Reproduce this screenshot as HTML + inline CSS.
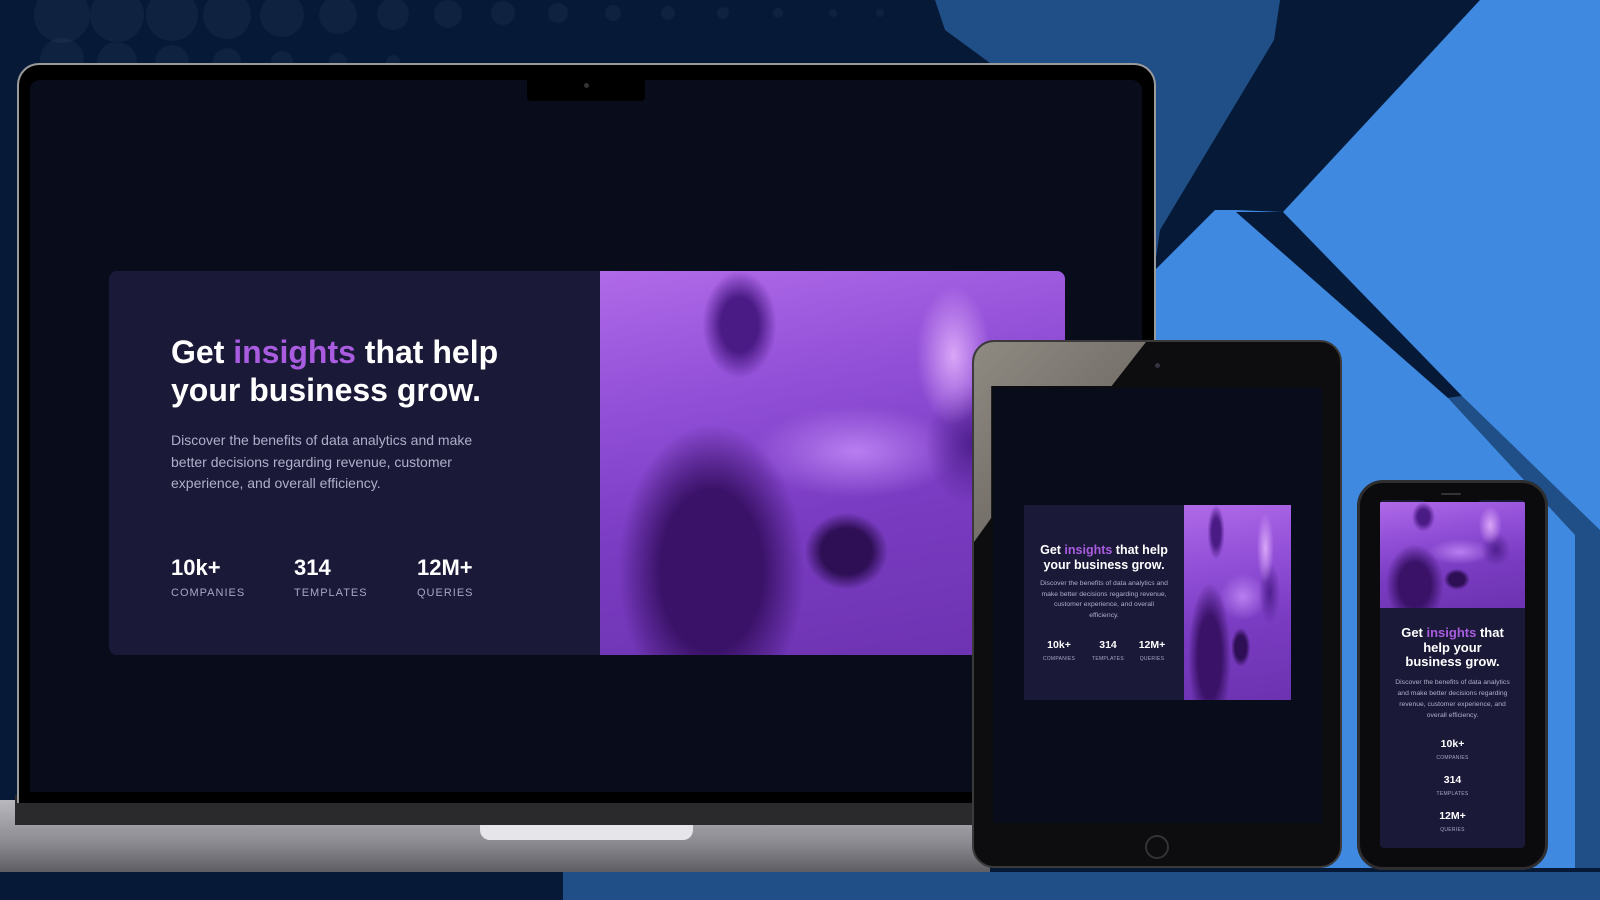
<!DOCTYPE html>
<html><head><meta charset="utf-8"><style>
*{margin:0;padding:0;box-sizing:border-box}
body{width:1600px;height:900px;overflow:hidden;background:#061a38;font-family:"Liberation Sans",sans-serif;position:relative}
.a{position:absolute}
.img{background:
 radial-gradient(ellipse 20% 38% at 24% 78%,#3a1268 0,#3a1268 55%,transparent 100%),
 radial-gradient(ellipse 9% 10% at 53% 73%,#2e0f55 0,#2e0f55 60%,transparent 100%),
 radial-gradient(ellipse 8% 14% at 30% 14%,#4a1a85 0,#4a1a85 50%,transparent 100%),
 radial-gradient(ellipse 8% 18% at 76% 22%,#d9a6f7 0,transparent 100%),
 radial-gradient(ellipse 10% 16% at 80% 45%,#4f1f8e 0,transparent 100%),
 radial-gradient(ellipse 22% 12% at 55% 47%,#b87ef0 0,transparent 100%),
 linear-gradient(170deg,#b06ae8 0%,#9250d8 30%,#7a3cc2 60%,#6c32b0 100%)}
.h{color:#fff;font-weight:bold}
.p{color:#b0afc8}
.pu{color:#a95ce0}
.n{color:#fff;font-weight:bold}
.l{color:#a8a7c0;letter-spacing:1px}
</style></head><body>
<svg class="a" style="left:0;top:0" width="1600" height="900">
 <g fill="#ffffff" fill-opacity="0.04">
  <circle cx="62" cy="15" r="28"/><circle cx="117" cy="15" r="27"/><circle cx="172" cy="15" r="26"/><circle cx="227" cy="15" r="24"/><circle cx="282" cy="15" r="22"/><circle cx="338" cy="15" r="19"/><circle cx="393" cy="14" r="16"/><circle cx="448" cy="14" r="14"/><circle cx="503" cy="13" r="12"/><circle cx="558" cy="13" r="10"/><circle cx="613" cy="13" r="8"/><circle cx="668" cy="13" r="7"/><circle cx="723" cy="13" r="6"/><circle cx="778" cy="13" r="5"/><circle cx="833" cy="13" r="4"/><circle cx="880" cy="13" r="4"/>
  <circle cx="62" cy="60" r="22"/><circle cx="117" cy="62" r="20"/><circle cx="172" cy="62" r="17"/><circle cx="227" cy="62" r="14"/><circle cx="282" cy="62" r="11"/><circle cx="338" cy="62" r="9"/><circle cx="393" cy="62" r="7"/>
 </g>
 <polygon points="935,0 1280,0 1274,40 1160,230 1150,300 990,63 945,30" fill="#1f4f86"/>
 <polygon points="1480,0 1600,0 1600,900 1150,900 1150,275 1215,210 1235,210 1283,212" fill="#3f8ae0"/>
 <polygon points="1236,212 1283,212 1462,396 1448,398" fill="#061a38"/>
 <polygon points="1448,398 1462,396 1600,530 1600,900 1575,900 1575,535" fill="#1f4f86"/>
 <rect x="0" y="868" width="1600" height="32" fill="#061a38"/>
 <rect x="563" y="872" width="1037" height="28" fill="#1f4f86"/>
</svg>

<!-- Laptop -->
<div class="a" style="left:0;top:800px;width:990px;height:72px;background:linear-gradient(#b8b8be,#8a8a90 60%,#5d5d63);"></div>
<div class="a" style="left:15px;top:795px;width:975px;height:30px;background:#2a2a2c"></div>
<div class="a" style="left:480px;top:825px;width:213px;height:15px;background:#e6e6ea;border-radius:0 0 10px 10px"></div>
<div class="a" style="left:17px;top:63px;width:1139px;height:740px;background:#000;border-radius:22px 22px 0 0;border:2px solid #9a9a9a;border-bottom:none"></div>
<div class="a" style="left:30px;top:80px;width:1112px;height:712px;background:#090c1a;border-radius:10px 10px 0 0"></div>
<div class="a" style="left:527px;top:80px;width:118px;height:21px;background:#000;border-radius:0 0 4px 4px"></div>
<div class="a" style="left:584px;top:83px;width:5px;height:5px;background:#333;border-radius:50%"></div>
<div class="a" style="left:109px;top:271px;width:956px;height:384px;background:#1b1938;border-radius:8px;overflow:hidden">
 <div class="a img" style="left:491px;top:0;width:465px;height:384px"></div>
 <div class="a h" style="left:62px;top:62px;font-size:32px;line-height:38px;width:400px">Get <span class="pu">insights</span> that help your business grow.</div>
 <div class="a p" style="left:62px;top:159px;font-size:14px;line-height:21.5px;width:320px">Discover the benefits of data analytics and make better decisions regarding revenue, customer experience, and overall efficiency.</div>
 <div class="a n" style="left:62px;top:284px;font-size:22px">10k+</div>
 <div class="a l" style="left:62px;top:316px;font-size:11px">COMPANIES</div>
 <div class="a n" style="left:185px;top:284px;font-size:22px">314</div>
 <div class="a l" style="left:185px;top:316px;font-size:11px">TEMPLATES</div>
 <div class="a n" style="left:308px;top:284px;font-size:22px">12M+</div>
 <div class="a l" style="left:308px;top:316px;font-size:11px">QUERIES</div>
</div>

<!-- Tablet -->
<div class="a" style="left:972px;top:340px;width:370px;height:528px;background:#0d0d0f;border-radius:22px;border:2px solid #3a3a3a"></div>
<div class="a" style="left:974px;top:342px;width:172px;height:200px;background:linear-gradient(135deg,#8f8a82,#5e5a55);clip-path:polygon(0 0,100% 0,80% 22%,10% 22%,10% 88%,0 100%);border-radius:20px 0 0 0"></div>
<div class="a" style="left:1155px;top:363px;width:5px;height:5px;background:#334;border-radius:50%"></div>
<div class="a" style="left:993px;top:388px;width:329px;height:435px;background:#090c1a"></div>
<div class="a" style="left:1145px;top:835px;width:24px;height:24px;border:2px solid #333;border-radius:50%"></div>
<div class="a" style="left:1024px;top:505px;width:267px;height:195px;background:#1b1938;overflow:hidden">
 <div class="a img" style="left:160px;top:0;width:107px;height:195px"></div>
 <div class="a h" style="left:10px;top:38px;width:140px;text-align:center;font-size:12.5px;line-height:14.5px">Get <span class="pu">insights</span> that help your business grow.</div>
 <div class="a p" style="left:16px;top:74px;width:128px;text-align:center;font-size:6.8px;line-height:10.7px">Discover the benefits of data analytics and make better decisions regarding revenue, customer experience, and overall efficiency.</div>
 <div class="a n" style="left:18px;top:134px;width:34px;text-align:center;font-size:10.5px">10k+</div>
 <div class="a l" style="left:14px;top:151px;width:42px;text-align:center;font-size:5px;letter-spacing:.3px">COMPANIES</div>
 <div class="a n" style="left:67px;top:134px;width:34px;text-align:center;font-size:10.5px">314</div>
 <div class="a l" style="left:63px;top:151px;width:42px;text-align:center;font-size:5px;letter-spacing:.3px">TEMPLATES</div>
 <div class="a n" style="left:111px;top:134px;width:34px;text-align:center;font-size:10.5px">12M+</div>
 <div class="a l" style="left:107px;top:151px;width:42px;text-align:center;font-size:5px;letter-spacing:.3px">QUERIES</div>
</div>

<!-- Phone -->
<div class="a" style="left:1357px;top:480px;width:191px;height:390px;background:#0b0b0d;border-radius:26px;border:3px solid #2e2e30"></div>
<div class="a" style="left:1380px;top:500px;width:145px;height:348px;background:#1b1938;border-radius:4px;overflow:hidden">
 <div class="a img" style="left:0;top:2px;width:145px;height:106px"></div>
 <div class="a h" style="left:14px;top:126px;width:117px;text-align:center;font-size:13px;line-height:14.5px">Get <span class="pu">insights</span> that help your business grow.</div>
 <div class="a p" style="left:12px;top:177px;width:121px;text-align:center;font-size:6.8px;line-height:11px">Discover the benefits of data analytics and make better decisions regarding revenue, customer experience, and overall efficiency.</div>
 <div class="a n" style="left:0;top:238px;width:145px;text-align:center;font-size:10.5px">10k+</div>
 <div class="a l" style="left:0;top:255px;width:145px;text-align:center;font-size:5px;letter-spacing:.3px">COMPANIES</div>
 <div class="a n" style="left:0;top:274px;width:145px;text-align:center;font-size:10.5px">314</div>
 <div class="a l" style="left:0;top:291px;width:145px;text-align:center;font-size:5px;letter-spacing:.3px">TEMPLATES</div>
 <div class="a n" style="left:0;top:310px;width:145px;text-align:center;font-size:10.5px">12M+</div>
 <div class="a l" style="left:0;top:327px;width:145px;text-align:center;font-size:5px;letter-spacing:.3px">QUERIES</div>
</div>
<div class="a" style="left:1420px;top:490px;width:64px;height:12px;background:#0b0b0d;border-radius:0 0 8px 8px"></div>
<div class="a" style="left:1441px;top:493px;width:20px;height:2px;background:#333;border-radius:1px"></div>
</body></html>
